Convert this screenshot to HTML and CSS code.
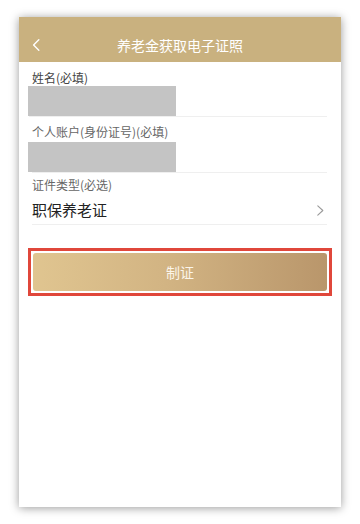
FILE: index.html
```html
<!DOCTYPE html>
<html lang="zh-CN">
<head>
<meta charset="utf-8">
<title>养老金获取电子证照</title>
<link rel="stylesheet" href="styles.css">
</head>
<body>
<div class="phone">
  <header class="topbar">
    <span class="back">
      <svg width="8" height="12" viewBox="0 0 8 12"><path d="M6.8 0.8 L1.6 6 L6.8 11.2" fill="none" stroke="#fff" stroke-width="1.4" stroke-linecap="round" stroke-linejoin="round"/></svg>
    </span>
    <h1 class="title">养老金获取电子证照</h1>
  </header>
  <section class="form">
    <div class="field field-first">
      <div class="label label-dark">姓名(必填)</div>
      <div class="masked"></div>
    </div>
    <div class="field field-second">
      <div class="label">个人账户(身份证号)(必填)</div>
      <div class="masked"></div>
    </div>
    <div class="field field-select">
      <div class="label">证件类型(必选)</div>
      <div class="select-row">
        <span class="value">职保养老证</span>
        <svg class="arrow" width="7" height="11" viewBox="0 0 7 11"><path d="M0.8 0.8 L5.8 5.5 L0.8 10.2" fill="none" stroke="#9a9a9a" stroke-width="1.1" stroke-linecap="round" stroke-linejoin="round"/></svg>
      </div>
    </div>
    <div class="highlight">
      <button class="submit" type="button">制证</button>
    </div>
  </section>
</div>
</body>
</html>
```

FILE: styles.css
```css
html, body {
  margin: 0;
  padding: 0;
  background: #ffffff;
}
body {
  font-family: "Noto Sans CJK SC", "Noto Sans", sans-serif;
  width: 360px;
  height: 524px;
  overflow: hidden;
}
.phone {
  margin: 17px 0 0 19px;
  width: 322px;
  height: 490px;
  background: #ffffff;
  box-shadow: 0 1px 9px rgba(0, 0, 0, 0.4);
}
.topbar {
  height: 45px;
  box-sizing: border-box;
  padding-top: 10px;
  background: #c9b17f;
  display: flex;
  align-items: center;
  justify-content: center;
  position: relative;
}
.back {
  position: absolute;
  left: 13px;
  top: 22px;
  display: flex;
}
.title {
  margin: 0;
  font-size: 14px;
  font-weight: normal;
  color: #ffffff;
  line-height: 20px;
}
.form {
  display: flex;
  flex-direction: column;
}
.field {
  margin: 0 14px 0 13px;
  border-bottom: 1px solid #efefef;
  display: flex;
  flex-direction: column;
}
.field-first {
  margin-left: 10px;
  padding-top: 8px;
}
.field-first .label {
  padding-left: 3px;
}
.field-first .masked {
  margin-left: -1px;
}
.field-second {
  padding-top: 7px;
}
.field-second .masked {
  margin-top: 2px;
  margin-left: -4px;
}
.field-select {
  padding-top: 4px;
  padding-bottom: 3px;
}
.label {
  font-size: 12px;
  line-height: 16px;
  color: #666666;
}
.label-dark {
  color: #444444;
}
.masked {
  width: 148px;
  height: 30px;
  background: #c4c4c4;
}
.select-row {
  margin-top: 6px;
  display: flex;
  align-items: center;
  justify-content: space-between;
  padding-right: 3px;
}
.value {
  font-size: 15px;
  line-height: 22px;
  color: #222222;
}
.arrow {
  display: block;
}
.highlight {
  margin: 23px 9px 0 9px;
  border: 3px solid #e0473b;
  padding: 2px;
}
.submit {
  display: block;
  width: 100%;
  height: 38px;
  border: 0;
  border-radius: 3px;
  background: linear-gradient(90deg, #e0c590 0%, #d2b483 45%, #b9966b 100%);
  color: #fbf5ea;
  font-family: "Noto Sans CJK SC", "Noto Sans", sans-serif;
  font-size: 14px;
  padding: 0;
  cursor: pointer;
}
```
